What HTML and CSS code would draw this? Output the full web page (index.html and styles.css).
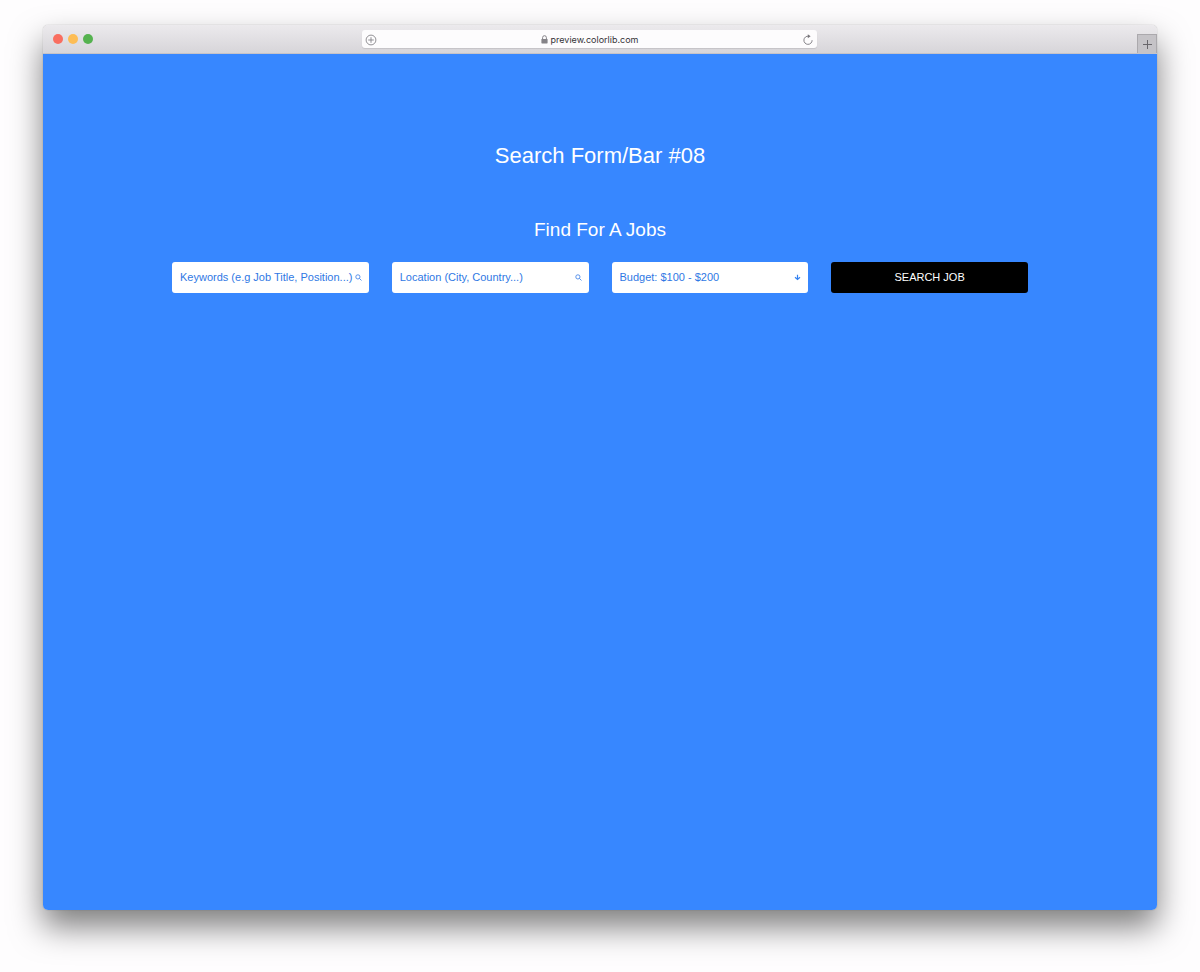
FILE: index.html
```html
<!DOCTYPE html>
<html lang="en">
<head>
<meta charset="utf-8">
<meta name="viewport" content="width=device-width, initial-scale=1">
<title>Search Form/Bar #08</title>
<link rel="stylesheet" href="styles.css">
</head>
<body>
<div class="window">
  <header class="titlebar">
    <div class="lights">
      <button class="light light-close" type="button" aria-label="Close"></button>
      <button class="light light-minimize" type="button" aria-label="Minimize"></button>
      <button class="light light-zoom" type="button" aria-label="Zoom"></button>
    </div>
    <div class="address">
      <button class="tool" type="button" aria-label="Add bookmark">
        <svg width="12" height="12" viewBox="0 0 12 12" fill="none" stroke="#858388" stroke-width="0.9"><circle cx="6" cy="6" r="4.9"/><path d="M6 3.2v5.6M3.2 6h5.6"/></svg>
      </button>
      <a class="site" href="#">
        <svg width="7" height="9" viewBox="0 0 7 9"><path d="M1.6 4.2V2.6a1.9 1.9 0 0 1 3.8 0v1.6" fill="none" stroke="#858388" stroke-width="1"/><rect x="0.4" y="4" width="6.2" height="4.4" rx="0.6" fill="#858388"/></svg>
        <span>preview.colorlib.com</span>
      </a>
      <button class="tool" type="button" aria-label="Reload">
        <svg width="12" height="12" viewBox="0 0 12 12"><path d="M6.6 2.2A4.1 4.1 0 1 0 10.1 6.2" fill="none" stroke="#77757a" stroke-width="0.9"/><path d="M5.8 0.3 8.6 2.3 5.8 4.3z" fill="#77757a"/></svg>
      </button>
    </div>
    <button class="new-tab" type="button" aria-label="New tab">
      <svg width="9" height="9" viewBox="0 0 9 9" stroke="#68666b" stroke-width="1"><path d="M4.5 0v9M0 4.5h9"/></svg>
    </button>
  </header>
  <main class="page">
    <h1 class="title">Search Form/Bar #08</h1>
    <h2 class="subtitle">Find For A Jobs</h2>
    <form class="search">
      <div class="field">
        <input class="control" type="text" aria-label="Keywords" placeholder="Keywords (e.g Job Title, Position...)">
        <svg class="icon" width="7" height="7" viewBox="0 0 7 7" fill="none" stroke="#4a88e8" stroke-width="0.9"><circle cx="2.9" cy="2.9" r="2.1"/><path d="M4.4 4.4 6.5 6.5"/></svg>
      </div>
      <div class="field">
        <input class="control" type="text" aria-label="Location" placeholder="Location (City, Country...)">
        <svg class="icon" width="7" height="7" viewBox="0 0 7 7" fill="none" stroke="#4a88e8" stroke-width="0.9"><circle cx="2.9" cy="2.9" r="2.1"/><path d="M4.4 4.4 6.5 6.5"/></svg>
      </div>
      <div class="field">
        <select class="control" aria-label="Budget">
          <option>Budget: $100 - $200</option>
        </select>
        <svg class="icon" width="7" height="7" viewBox="0 0 7 7" fill="none" stroke="#3482f0" stroke-width="1.2"><path d="M3.5 0.7v4.6M1 3.2l2.5 2.3L6 3.2"/></svg>
      </div>
      <button class="submit" type="submit">SEARCH JOB</button>
    </form>
  </main>
</div>
</body>
</html>
```
FILE: styles.css
```css
* {
  box-sizing: border-box;
}

body {
  display: flex;
  min-height: 100vh;
  margin: 0;
  padding: 25px 43px 62px;
  background: #fefdfe;
  font-family: "Liberation Sans", Arial, sans-serif;
}

button {
  padding: 0;
  border: 0;
  background: none;
  cursor: pointer;
}

svg {
  display: block;
}

.window {
  display: flex;
  flex: 1;
  flex-direction: column;
  min-width: 0;
  border-radius: 5px;
  box-shadow: 0 0 1px rgba(0, 0, 0, 0.4), 0 17px 32px rgba(0, 0, 0, 0.5);
}

.titlebar {
  display: grid;
  grid-template-columns: 1fr minmax(0, 455px) 1fr 21px;
  align-items: center;
  height: 29px;
  border-bottom: 1px solid #c6c3c8;
  border-radius: 5px 5px 0 0;
  background: linear-gradient(#eceaed, #d7d5d9);
}

.lights {
  display: flex;
  gap: 5px;
  padding-left: 10px;
}

.light {
  width: 10px;
  height: 10px;
  border-radius: 50%;
}

.light-close {
  background: #f96e60;
}

.light-minimize {
  background: #fdbd55;
}

.light-zoom {
  background: #55b24f;
}

.address {
  display: flex;
  align-items: center;
  justify-content: space-between;
  height: 18px;
  padding: 1px 3px 0;
  border-radius: 3px;
  background: #fdfcfd;
  box-shadow: 0 1px 1px rgba(0, 0, 0, 0.1);
}

.site {
  display: flex;
  align-items: center;
  gap: 3px;
  color: #343236;
  font-family: Inter, sans-serif;
  font-size: 9px;
  line-height: 12px;
  text-decoration: none;
}

.new-tab {
  display: grid;
  grid-column: 3 / 5;
  place-items: center;
  align-self: end;
  justify-self: end;
  width: 20px;
  height: 19px;
  border: 1px solid #aba9ad;
  border-bottom: 0;
  background: #c5c3c7;
}

.page {
  flex: 1;
  padding: 88px 24px 40px;
  border-radius: 0 0 5px 5px;
  background: #3787ff;
  color: #fff;
}

.title,
.subtitle {
  margin: 0;
  font-weight: 400;
  text-align: center;
}

.title {
  font-size: 22px;
  line-height: 28px;
}

.subtitle {
  margin-top: 48px;
  font-size: 19px;
  line-height: 24px;
}

.search {
  display: grid;
  grid-template-columns: repeat(4, minmax(0, 1fr));
  gap: 23px;
  max-width: 856px;
  margin: 20px auto 0;
}

.field {
  position: relative;
}

.control,
.submit {
  display: block;
  width: 100%;
  height: 31px;
  padding: 0 0 2px;
  border: 0;
  border-radius: 3px;
  font-family: inherit;
  font-size: 11px;
}

.control {
  padding: 0 16px 2px 8px;
  background: #fff;
  color: #2f78e4;
  appearance: none;
}

.control::placeholder {
  color: #2f78e4;
  opacity: 1;
}

.icon {
  position: absolute;
  top: 12px;
  right: 7px;
  pointer-events: none;
}

.submit {
  background: #000;
  color: #fff;
}
```
